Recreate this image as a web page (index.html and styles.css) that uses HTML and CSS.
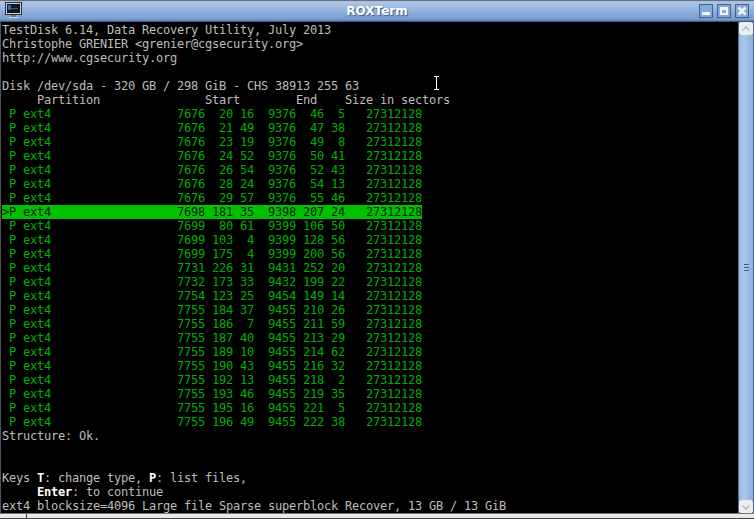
FILE: index.html
```html
<!DOCTYPE html>
<html lang="en">
<head>
<meta charset="utf-8">
<title>ROXTerm</title>
<link rel="stylesheet" href="styles.css">
</head>
<body>
<div class="window">
  <header class="titlebar">
    <svg class="app-icon" width="17" height="17" viewBox="0 0 17 17">
      <rect x="0.5" y="0.5" width="16" height="12" fill="#c9ccd0" stroke="#2a2f38"/>
      <rect x="2" y="2" width="13" height="9" fill="#10151f"/>
      <rect x="3" y="3" width="3" height="5" fill="#1d6fb8"/>
      <rect x="6" y="6" width="7" height="1" fill="#4a5b70"/>
      <rect x="6" y="13" width="5" height="2" fill="#6b7078"/>
      <rect x="4" y="15" width="9" height="1" fill="#d5d8dc"/>
    </svg>
    <div class="title">ROXTerm</div>
    <div class="buttons">
      <div class="wbtn"><svg width="14" height="14" viewBox="0 0 14 14"><rect x="3" y="8" width="8" height="3" fill="#f2f6fc"/></svg></div>
      <div class="wbtn"><svg width="14" height="14" viewBox="0 0 14 14"><path d="M3 3h8v8H3z M5 6v3h4V6z" fill="#f2f6fc" fill-rule="evenodd"/></svg></div>
      <div class="wbtn"><svg width="14" height="14" viewBox="0 0 14 14"><path d="M3.500 3.500L10.500 10.500M10.500 3.500L3.500 10.500" stroke="#f2f6fc" stroke-width="2.600" fill="none"/></svg></div>
    </div>
  </header>
  <main class="body">
    <div class="term">
<pre class="line">TestDisk 6.14, Data Recovery Utility, July 2013</pre>
<pre class="line">Christophe GRENIER &lt;grenier@cgsecurity.org&gt;</pre>
<pre class="line">http://www.cgsecurity.org</pre>
<pre class="line"> </pre>
<pre class="line">Disk /dev/sda - 320 GB / 298 GiB - CHS 38913 255 63</pre>
<pre class="line">     Partition               Start        End    Size in sectors</pre>
<pre class="line row"> P ext4                  7676  20 16  9376  46  5   27312128</pre>
<pre class="line row"> P ext4                  7676  21 49  9376  47 38   27312128</pre>
<pre class="line row"> P ext4                  7676  23 19  9376  49  8   27312128</pre>
<pre class="line row"> P ext4                  7676  24 52  9376  50 41   27312128</pre>
<pre class="line row"> P ext4                  7676  26 54  9376  52 43   27312128</pre>
<pre class="line row"> P ext4                  7676  28 24  9376  54 13   27312128</pre>
<pre class="line row"> P ext4                  7676  29 57  9376  55 46   27312128</pre>
<pre class="line selected">&gt;P ext4                  7698 181 35  9398 207 24   27312128</pre>
<pre class="line row"> P ext4                  7699  80 61  9399 106 50   27312128</pre>
<pre class="line row"> P ext4                  7699 103  4  9399 128 56   27312128</pre>
<pre class="line row"> P ext4                  7699 175  4  9399 200 56   27312128</pre>
<pre class="line row"> P ext4                  7731 226 31  9431 252 20   27312128</pre>
<pre class="line row"> P ext4                  7732 173 33  9432 199 22   27312128</pre>
<pre class="line row"> P ext4                  7754 123 25  9454 149 14   27312128</pre>
<pre class="line row"> P ext4                  7755 184 37  9455 210 26   27312128</pre>
<pre class="line row"> P ext4                  7755 186  7  9455 211 59   27312128</pre>
<pre class="line row"> P ext4                  7755 187 40  9455 213 29   27312128</pre>
<pre class="line row"> P ext4                  7755 189 10  9455 214 62   27312128</pre>
<pre class="line row"> P ext4                  7755 190 43  9455 216 32   27312128</pre>
<pre class="line row"> P ext4                  7755 192 13  9455 218  2   27312128</pre>
<pre class="line row"> P ext4                  7755 193 46  9455 219 35   27312128</pre>
<pre class="line row"> P ext4                  7755 195 16  9455 221  5   27312128</pre>
<pre class="line row"> P ext4                  7755 196 49  9455 222 38   27312128</pre>
<pre class="line">Structure: Ok.</pre>
<pre class="line"> </pre>
<pre class="line"> </pre>
<pre class="line">Keys <b>T</b>: change type, <b>P</b>: list files,</pre>
<pre class="line">     <b>Enter</b>: to continue</pre>
<pre class="line">ext4 blocksize=4096 Large file Sparse superblock Recover, 13 GB / 13 GiB</pre>
      <svg class="ibeam" width="7" height="14" viewBox="0 0 7 14"><path d="M1 0.500h5M1 13.500h5M3.500 0.500v13" stroke="#fff" fill="none"/></svg>
    </div>
    <aside class="scrollbar">
      <div class="sbtn"><svg width="14" height="12" viewBox="0 0 14 12"><path d="M3.500 7.500L7 4l3.500 3.500" stroke="#b4b8bc" stroke-width="1.500" fill="none"/></svg></div>
      <div class="thumb"><span class="grip"></span><span class="grip"></span><span class="grip"></span></div>
      <div class="sbtn"><svg width="14" height="12" viewBox="0 0 14 12"><path d="M3.500 4.500L7 8l3.500-3.500" stroke="#b4b8bc" stroke-width="1.500" fill="none"/></svg></div>
    </aside>
  </main>
  <footer class="status"><div class="status-a"></div><div class="status-b"></div></footer>
</div>
</body>
</html>
```
FILE: styles.css
```css
html, body { margin: 0; padding: 0; background: #000; }
.window { width: 754px; height: 519px; display: flex; flex-direction: column; overflow: hidden; background: #000; }
.titlebar { flex: 0 0 22px; box-sizing: border-box; display: flex; align-items: center; position: relative; padding: 0 5px 1px 5px;
  background: linear-gradient(#a5bfe2 0, #a9c4e6 10%, #8fafdc 50%, #7a9bcd 90%, #5f7fb1 100%); border-top: 1px solid #6d6f74; border-bottom: 1px solid #3e5a88; }
.app-icon { flex: none; }
.title { position: absolute; left: 0; right: 0; top: 3px; text-align: center; font: bold 12px/14px "DejaVu Sans", sans-serif; color: #fff; text-shadow: 1px 1px 1px #3d5c8f; }
.buttons { margin-left: auto; display: flex; gap: 4px; position: relative; }
.wbtn { width: 14px; height: 14px; box-sizing: border-box; border: 1px solid #42618f; display: flex; align-items: center; justify-content: center; background: #88a9d8; }
.wbtn svg { flex: none; }
.body { flex: 1; min-height: 0; display: flex; }
.term { flex: 1; min-width: 0; position: relative; background: #000; padding: 1px 0 0 2px; color: #bdbdbd; box-shadow: inset 1px 0 0 #555; }
.line { margin: 0; height: 14px; font: 12px/14px "DejaVu Sans Mono", monospace; letter-spacing: -0.225px; white-space: pre; width: 420px; }
.line b { color: #fff; font-weight: bold; }
.row { color: #00ae00; }
.selected { background: #00c000; color: #062006; }
.ibeam { position: absolute; left: 433px; top: 54px; }
.scrollbar { flex: 0 0 16px; display: flex; flex-direction: column; background: #4f6a94; }
.sbtn { flex: 0 0 13px; margin: 0 1px; display: flex; align-items: center; justify-content: center; background: #eceef0; border-radius: 2px; }
.sbtn svg { flex: none; }
.thumb { flex: 1; margin: 0 1px; display: flex; flex-direction: column; align-items: center; justify-content: center; gap: 2px;
  background: linear-gradient(90deg, #9dbde4, #a9c8ee 40%, #8eafdc); }
.grip { width: 5px; height: 1px; background: #3f5c8c; }
.status { flex: 0 0 6px; box-sizing: border-box; display: flex; border-top: 1px solid #777; background: #444; gap: 1px; padding-bottom: 1px; }
.status-a { flex: 0 0 26px; background: #e8e8e8; }
.status-b { flex: 1; background: #e8e8e8; }
```
